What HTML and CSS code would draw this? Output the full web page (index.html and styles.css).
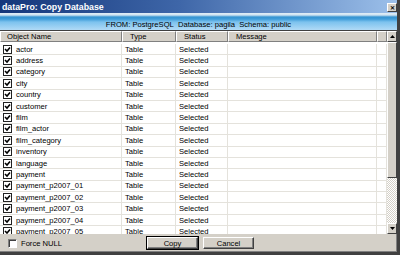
FILE: index.html
```
<!DOCTYPE html>
<html lang="en">
<head>
  <meta charset="UTF-8">
  <title>dataPro: Copy Database</title>
  <link rel="stylesheet" href="styles.css">
</head>
<body>
  <div class="window">
    <div class="titlebar">
      <span class="title">dataPro: Copy Database</span>
      <span class="close">&#x2715;</span>
    </div>
    <div class="banner">FROM: PostgreSQL&nbsp; Database: pagila&nbsp; Schema: public</div>

    <div class="list">
      <div class="grid">
        <div class="row head">
          <div class="cell">Object Name</div>
          <div class="cell">Type</div>
          <div class="cell">Status</div>
          <div class="cell">Message</div>
          <div class="cell"></div>
        </div>
        <div class="rows" id="rows"></div>
      </div>
      <div class="scrollbar">
        <div class="sbtn"><svg width="5" height="3" viewBox="0 0 5 3"><path d="M2.5 0 L5 3 L0 3 Z" fill="#000"/></svg></div>
        <div class="track">
          <div class="thumb"></div>
        </div>
        <div class="sbtn"><svg width="5" height="3" viewBox="0 0 5 3"><path d="M0 0 L5 0 L2.5 3 Z" fill="#000"/></svg></div>
      </div>
    </div>

    <div class="footer">
      <label class="force"><span class="box"></span>Force NULL</label>
      <div class="buttons">
        <button class="btn default">Copy</button>
        <button class="btn">Cancel</button>
      </div>
    </div>
  </div>

  <script>
    const names = ['actor', 'address', 'category', 'city', 'country', 'customer', 'film',
      'film_actor', 'film_category', 'inventory', 'language', 'payment',
      'payment_p2007_01', 'payment_p2007_02', 'payment_p2007_03', 'payment_p2007_04', 'payment_p2007_05'];
    const rows = document.getElementById('rows');
    const check = '<svg width="7" height="7" viewBox="0 0 7 7"><path d="M1 3 L3 5 L6 1.5" stroke="#000" stroke-width="1.6" fill="none"/></svg>';

    names.forEach(name => {
      const row = document.createElement('div');
      row.className = 'row';
      row.innerHTML = `<div class="cell"><span class="box">${check}</span>${name}</div>` +
        '<div class="cell">Table</div><div class="cell">Selected</div><div class="cell"></div><div class="cell"></div>';
      rows.appendChild(row);
    });
  </script>
</body>
</html>
```

FILE: styles.css
```
* {
  margin: 0;
  padding: 0;
  box-sizing: border-box;
}
body {
  font-family: 'Liberation Sans', Arial, sans-serif;
  font-size: 7.6px;
  color: #000;
  background: #d4d0c8;
  overflow: hidden;
}

.window {
  width: 400px;
  height: 255px;
  display: flex;
  flex-direction: column;
  background: #d4d0c8;
  border-right: 3px solid #404040;
  border-bottom: 3px solid #404040;
  box-shadow: inset -1px -1px 0 #808080;
}

.titlebar {
  height: 13px;
  flex: none;
  display: flex;
  align-items: center;
  justify-content: space-between;
  padding: 0 0 0 2px;
  background: linear-gradient(to right, #14367a, #3e66a8 45%, #9cc0ea);
}
.title {
  color: #fff;
  font-weight: bold;
  font-size: 8.8px;
}
.close {
  width: 10px;
  height: 9px;
  margin-top: 1px;
  display: flex;
  align-items: center;
  justify-content: center;
  font-size: 6px;
  font-weight: bold;
  background: #d4d0c8;
  border: 1px solid;
  border-color: #fff #404040 #404040 #fff;
}

.banner {
  height: 17px;
  flex: none;
  text-align: center;
  padding-top: 8px;
  line-height: 8px;
  background: linear-gradient(to bottom, #e2eef6 0, #cfe3f1 2px, #3594d2 4px, #3f9cd8 6px, #7cc2ee 9px, #b0daf6 17px);
}

.list {
  flex: 1;
  min-height: 0;
  display: flex;
  border-top: 1px solid #404040;
  background: #fff;
  overflow: hidden;
}
.grid {
  width: 387px;
  overflow: hidden;
}
.rows {
  padding-top: 2px;
}
.row {
  display: grid;
  grid-template-columns: 122px 54px 52px 149px 10px;
  height: 11.4px;
  line-height: 11px;
}
.row .cell {
  border-right: 1px solid #e4e2dc;
  border-bottom: 1px solid #e4e2dc;
  padding-left: 3px;
  white-space: nowrap;
  overflow: hidden;
  display: flex;
  align-items: center;
}
.row.head {
  height: 11px;
  background: #d4d0c8;
}
.row.head .cell {
  padding-left: 7px;
  border-top: 1px solid #fff;
  border-left: 1px solid #fff;
  border-right: 1px solid #808080;
  border-bottom: 1px solid #808080;
}
.row.head .cell:first-child {
  padding-left: 6px;
}

.box {
  width: 9px;
  height: 9px;
  margin-right: 4px;
  flex: none;
  display: flex;
  align-items: center;
  justify-content: center;
  background: #fff;
  border: 1px solid #222;
}

.scrollbar {
  width: 10px;
  display: flex;
  flex-direction: column;
}
.sbtn {
  height: 11px;
  flex: none;
  display: flex;
  align-items: center;
  justify-content: center;
  background: #d4d0c8;
  border: 1px solid;
  border-color: #fff #404040 #404040 #fff;
}
.track {
  flex: 1;
  background-color: #eeece8;
  background-image: repeating-conic-gradient(#d4d0c8 0 25%, #fff 0 50%);
  background-size: 2px 2px;
}
.thumb {
  height: 136px;
  background: #d4d0c8;
  border: 1px solid;
  border-color: #fff #404040 #404040 #fff;
}

.footer {
  height: 18px;
  flex: none;
  display: flex;
  align-items: center;
  padding-left: 8px;
}
.force {
  display: flex;
  align-items: center;
  width: 139px;
}
.force .box {
  border-color: #808080 #fff #fff #808080;
  box-shadow: inset 1px 1px 0 #404040;
}
.buttons {
  display: flex;
  gap: 5px;
}
.btn {
  width: 51px;
  height: 12px;
  font-family: inherit;
  font-size: 7.6px;
  background: #d4d0c8;
  border: 1px solid;
  border-color: #fff #404040 #404040 #fff;
  box-shadow: inset -1px -1px 0 #808080;
}
.btn.default {
  outline: 1px solid #000;
}
```
